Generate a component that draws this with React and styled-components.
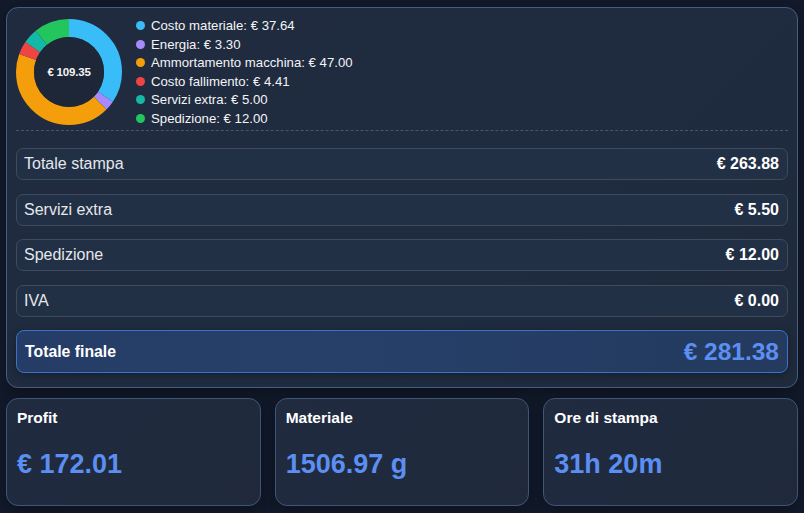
import React from 'react';
import styled, { createGlobalStyle } from 'styled-components';

const GlobalStyle = createGlobalStyle`
  html, body {
    margin: 0;
    padding: 0;
    background: #121a2b;
  }
  body {
    font-family: "Liberation Sans", Arial, sans-serif;
    color: #e5e7eb;
  }
  * {
    box-sizing: border-box;
  }
`;

const Page = styled.div`
  width: 804px;
  height: 513px;
  padding: 7px 6px 0 6px;
  display: flex;
  flex-direction: column;
  gap: 10px;
  background: #121a2b;
`;

const SummaryCard = styled.div`
  border: 1px solid #465d82;
  border-radius: 12px;
  background: linear-gradient(135deg, #202b40 0%, #1f2b3f 60%, #1f2a3c 100%);
  padding: 8px 9px 14px 9px;
  box-shadow: 0 4px 14px rgba(0, 0, 0, 0.35);
`;

const Header = styled.div`
  display: flex;
  align-items: center;
  gap: 14px;
  padding-bottom: 2px;
  border-bottom: 1px dashed #4b5566;
  height: 115px;
`;

const DonutBox = styled.div`
  position: relative;
  width: 106px;
  height: 106px;
  flex-shrink: 0;
`;

const DonutLabel = styled.div`
  position: absolute;
  inset: 0;
  display: flex;
  align-items: center;
  justify-content: center;
  font-size: 11.5px;
  font-weight: 700;
  color: #f3f4f6;
  letter-spacing: -0.2px;
`;

const Legend = styled.ul`
  list-style: none;
  margin: 0;
  padding: 0;
  display: flex;
  flex-direction: column;
`;

const LegendItem = styled.li`
  display: flex;
  align-items: center;
  gap: 6px;
  height: 18.67px;
  font-size: 13.2px;
  color: #f3f4f6;
`;

const Dot = styled.span`
  width: 9px;
  height: 9px;
  border-radius: 50%;
  background: ${(p) => p.$color};
  flex-shrink: 0;
`;

const Rows = styled.div`
  display: flex;
  flex-direction: column;
  gap: 13.5px;
  margin-top: 17px;
`;

const Row = styled.div`
  display: flex;
  align-items: center;
  justify-content: space-between;
  height: 32px;
  padding: 0 8px 0 7px;
  border: 1px solid #3e4a5d;
  border-radius: 7px;
  background: #223046;
`;

const RowLabel = styled.span`
  font-size: 16px;
  color: #e5e7eb;
`;

const RowValue = styled.span`
  font-size: 16px;
  font-weight: 700;
  color: #ffffff;
`;

const TotalRow = styled.div`
  display: flex;
  align-items: center;
  justify-content: space-between;
  height: 43px;
  padding: 0 8px 0 8px;
  border: 1px solid #3a72c9;
  border-radius: 8px;
  background: linear-gradient(90deg, #253d66 0%, #26406a 40%, #243a5e 100%);
  box-shadow: 0 2px 8px rgba(0, 0, 0, 0.3);
`;

const TotalLabel = styled.span`
  font-size: 15.8px;
  font-weight: 700;
  color: #ffffff;
`;

const TotalValue = styled.span`
  font-size: 24.5px;
  font-weight: 700;
  color: #5b8ff2;
`;

const Stats = styled.div`
  display: grid;
  grid-template-columns: repeat(3, 1fr);
  gap: 14px;
`;

const StatCard = styled.div`
  height: 108px;
  border: 1px solid #3f5679;
  border-radius: 12px;
  background: linear-gradient(135deg, #202b40 0%, #1f293b 100%);
  padding: 10px 10px;
  display: flex;
  flex-direction: column;
  gap: 22px;
  box-shadow: 0 4px 14px rgba(0, 0, 0, 0.35);
`;

const StatLabel = styled.div`
  font-size: 15.5px;
  font-weight: 700;
  color: #ffffff;
`;

const StatValue = styled.div`
  font-size: 27px;
  font-weight: 700;
  color: #5b8ff2;
`;

const segments = [
  { label: 'Costo materiale', value: 37.64, color: '#38bdf8' },
  { label: 'Energia', value: 3.3, color: '#a78bfa' },
  { label: 'Ammortamento macchina', value: 47.0, color: '#f59e0b' },
  { label: 'Costo fallimento', value: 4.41, color: '#ef4444' },
  { label: 'Servizi extra', value: 5.0, color: '#14b8a6' },
  { label: 'Spedizione', value: 12.0, color: '#22c55e' },
];

const rows = [
  { label: 'Totale stampa', value: '€ 263.88' },
  { label: 'Servizi extra', value: '€ 5.50' },
  { label: 'Spedizione', value: '€ 12.00' },
  { label: 'IVA', value: '€ 0.00' },
];

const stats = [
  { label: 'Profit', value: '€ 172.01' },
  { label: 'Materiale', value: '1506.97 g' },
  { label: 'Ore di stampa', value: '31h 20m' },
];

const Donut = () => {
  const total = segments.reduce((s, x) => s + x.value, 0);
  const r = 44;
  const c = 2 * Math.PI * r;
  let offset = 0;
  return (
    <DonutBox>
      <svg width="106" height="106" viewBox="0 0 106 106">
        <g transform="rotate(-90 53 53)">
          {segments.map((s) => {
            const len = (s.value / total) * c;
            const el = (
              <circle
                key={s.label}
                cx="53"
                cy="53"
                r={r}
                fill="none"
                stroke={s.color}
                strokeWidth="18"
                strokeDasharray={`${len} ${c - len}`}
                strokeDashoffset={-offset}
              />
            );
            offset += len;
            return el;
          })}
        </g>
        <circle cx="53" cy="53" r="35" fill="#1e2738" />
      </svg>
      <DonutLabel>€ {total.toFixed(2)}</DonutLabel>
    </DonutBox>
  );
};

const App = () => (
  <>
    <GlobalStyle />
    <Page>
      <SummaryCard>
        <Header>
          <Donut />
          <Legend>
            {segments.map((s) => (
              <LegendItem key={s.label}>
                <Dot $color={s.color} />
                {s.label}: € {s.value.toFixed(2)}
              </LegendItem>
            ))}
          </Legend>
        </Header>
        <Rows>
          {rows.map((r) => (
            <Row key={r.label}>
              <RowLabel>{r.label}</RowLabel>
              <RowValue>{r.value}</RowValue>
            </Row>
          ))}
          <TotalRow>
            <TotalLabel>Totale finale</TotalLabel>
            <TotalValue>€ 281.38</TotalValue>
          </TotalRow>
        </Rows>
      </SummaryCard>
      <Stats>
        {stats.map((s) => (
          <StatCard key={s.label}>
            <StatLabel>{s.label}</StatLabel>
            <StatValue>{s.value}</StatValue>
          </StatCard>
        ))}
      </Stats>
    </Page>
  </>
);

export default App;
